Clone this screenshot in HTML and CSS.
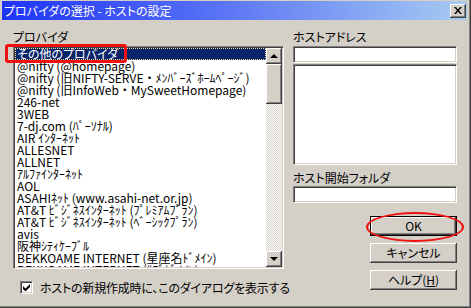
FILE: index.html
```html
<!DOCTYPE html>
<html lang="ja">
<head>
  <meta charset="UTF-8">
  <title>プロバイダの選択 - ホストの設定</title>
  <link rel="stylesheet" href="styles.css">
</head>
<body>
  <div class="window">
    <div class="titlebar">
      <span class="title">プロバイダの選択 - ホストの設定</span>
      <span class="close-btn">
        <svg width="8" height="7" viewBox="0 0 8 7"><path d="M0 0h2l2 2.5L6 0h2L5 3.5 8 7H6L4 4.5 2 7H0l3-3.5z" fill="#000"/></svg>
      </span>
    </div>

    <div class="content">
      <div class="left">
        <div class="label label-provider">プロバイダ</div>
        <div class="listbox">
          <ul class="items">
            <li class="selected">その他のプロバイダ</li>
            <li>@nifty (@homepage)</li>
            <li>@nifty (旧NIFTY-SERVE・ﾒﾝﾊﾞｰｽﾞﾎｰﾑﾍﾟｰｼﾞ)</li>
            <li>@nifty (旧InfoWeb・MySweetHomepage)</li>
            <li>246-net</li>
            <li>3WEB</li>
            <li>7-dj.com (ﾊﾟｰｿﾅﾙ)</li>
            <li>AIR ｲﾝﾀｰﾈｯﾄ</li>
            <li>ALLESNET</li>
            <li>ALLNET</li>
            <li>ｱﾙﾌｧｲﾝﾀｰﾈｯﾄ</li>
            <li>AOL</li>
            <li>ASAHIﾈｯﾄ (www.asahi-net.or.jp)</li>
            <li>AT&amp;T ﾋﾞｼﾞﾈｽｲﾝﾀｰﾈｯﾄ (ﾌﾟﾚﾐｱﾑﾌﾟﾗﾝ)</li>
            <li>AT&amp;T ﾋﾞｼﾞﾈｽｲﾝﾀｰﾈｯﾄ (ﾍﾞｰｼｯｸﾌﾟﾗﾝ)</li>
            <li>avis</li>
            <li>阪神ｼﾃｨｹｰﾌﾞﾙ</li>
            <li>BEKKOAME INTERNET (星座名ﾄﾞﾒｲﾝ)</li>
            <li>BEKKOAME INTERNET (ｻﾌﾞﾄﾞﾒｲﾝ)</li>
          </ul>
          <div class="scrollbar">
            <div class="sb-btn"><span class="arrow-up"></span></div>
            <div class="sb-thumb"></div>
            <div class="sb-track"></div>
            <div class="sb-btn"><span class="arrow-down"></span></div>
          </div>
          <span class="mark-box"></span>
        </div>
        <label class="check-row">
          <span class="checkbox">
            <svg width="7" height="7" viewBox="0 0 7 7"><path d="M0 2v3l2 2h1l4-4V0L2.5 4.5z" fill="#000"/></svg>
          </span>
          <span class="check-text">ホストの新規作成時に、このダイアログを表示する</span>
        </label>
      </div>

      <div class="right">
        <div class="label label-host">ホストアドレス</div>
        <div class="field"></div>
        <div class="field field-multi"></div>
        <div class="label label-folder">ホスト開始フォルダ</div>
        <div class="field"></div>
        <div class="buttons">
          <button class="btn btn-default">OK<span class="mark-ellipse"></span></button>
          <button class="btn">キャンセル</button>
          <button class="btn">ヘルプ(<u>H</u>)</button>
        </div>
      </div>
    </div>
  </div>
</body>
</html>
```

FILE: styles.css
```css
* {
  margin: 0;
  padding: 0;
  box-sizing: border-box;
}

body {
  font-family: "Noto Sans CJK JP", sans-serif;
  font-size: 12px;
  font-feature-settings: "palt";
  color: #000;
  background: #d4d0c8;
}

.window {
  width: 471px;
  height: 308px;
  background: #d4d0c8;
  padding: 1px 3px 0 2px;
  border-right: 1px solid #404040;
  border-bottom: 1px solid #404040;
  box-shadow: inset -1px -1px #808080;
}

/* タイトルバー */
.titlebar {
  height: 19px;
  display: flex;
  align-items: center;
  justify-content: space-between;
  padding: 0 1px 0 2px;
  background: linear-gradient(to right, #1f34f6 0%, #5069f6 40%, #a8ccf2 100%);
  color: #fff;
}

.title {
  line-height: 12px;
}

.close-btn {
  width: 16px;
  height: 14px;
  display: flex;
  align-items: center;
  justify-content: center;
  background: #d4d0c8;
  box-shadow: inset -1px -1px #404040, inset 1px 1px #fff, inset -2px -2px #808080;
}

/* 本体 */
.content {
  display: grid;
  grid-template-columns: 271px 164px;
  column-gap: 9px;
  padding: 11px 0 0 11px;
}

.label {
  height: 12px;
  line-height: 12px;
}

.label-provider {
  margin-bottom: 3px;
}

.label-host {
  margin-bottom: 3px;
}

.label-folder {
  margin: 7px 0 2px;
}

/* リストボックス */
.listbox {
  position: relative;
  height: 223px;
  display: flex;
  background: #fff;
  border: 1px solid;
  border-color: #808080 #fff #fff #808080;
  box-shadow: inset 1px 1px #404040, inset -1px -1px #d4d0c8;
  padding: 1px;
}

.items {
  flex: 1;
  list-style: none;
  overflow: hidden;
}

.items li {
  height: 12px;
  line-height: 12px;
  padding-left: 2px;
  white-space: nowrap;
  font-feature-settings: normal;
}

.items li.selected {
  background: #0a246a;
  color: #fff;
  outline: 1px dotted #f5db95;
  outline-offset: -1px;
  font-feature-settings: "palt";
}

/* 赤枠の注記 */
.mark-box {
  position: absolute;
  left: -9px;
  top: -3px;
  width: 122px;
  height: 19px;
  border: 3px solid #f01010;
  border-radius: 3px;
}

/* スクロールバー */
.scrollbar {
  width: 16px;
  display: flex;
  flex-direction: column;
}

.sb-btn,
.sb-thumb {
  background: #d4d0c8;
  box-shadow: inset -1px -1px #404040, inset 1px 1px #fff, inset -2px -2px #808080;
}

.sb-btn {
  height: 16px;
  display: flex;
  align-items: center;
  justify-content: center;
}

.sb-thumb {
  height: 40px;
}

.sb-track {
  flex: 1;
  background: repeating-conic-gradient(#fff 0 25%, #d4d0c8 0 50%) 0 0 / 2px 2px;
}

.arrow-up,
.arrow-down {
  width: 0;
  height: 0;
  border-left: 4px solid transparent;
  border-right: 4px solid transparent;
}

.arrow-up {
  border-bottom: 4px solid #000;
  margin-top: -1px;
}

.arrow-down {
  border-top: 4px solid #000;
}

/* チェックボックス */
.check-row {
  display: flex;
  align-items: center;
  gap: 7px;
  margin: 12px 0 0 7px;
  white-space: nowrap;
}

.checkbox {
  flex: none;
  width: 13px;
  height: 13px;
  display: flex;
  align-items: center;
  justify-content: center;
  background: #fff;
  border: 1px solid;
  border-color: #808080 #fff #fff #808080;
  box-shadow: inset 1px 1px #404040, inset -1px -1px #d4d0c8;
}

.check-text {
  line-height: 12px;
  letter-spacing: -0.2px;
}

/* 右側 */
.field {
  height: 17px;
  background: #fff;
  border: 1px solid;
  border-color: #808080 #fff #fff #808080;
  box-shadow: inset 1px 1px #404040, inset -1px -1px #d4d0c8;
}

.field-multi {
  height: 101px;
  margin-top: 1px;
}

.buttons {
  display: flex;
  flex-direction: column;
  align-items: flex-end;
  gap: 7px;
  margin-top: 13px;
}

.btn {
  position: relative;
  width: 87px;
  height: 20px;
  font: inherit;
  line-height: 12px;
  color: #000;
  background: #d4d0c8;
  border: none;
  box-shadow: inset -1px -1px #404040, inset 1px 1px #fff, inset -2px -2px #808080;
}

.btn-default {
  border: 1px solid #000;
}

.btn u {
  text-decoration: underline;
}

.mark-ellipse {
  position: absolute;
  left: -5px;
  top: -5px;
  width: 98px;
  height: 30px;
  border: 2px solid #f01010;
  border-radius: 50%;
}
```
